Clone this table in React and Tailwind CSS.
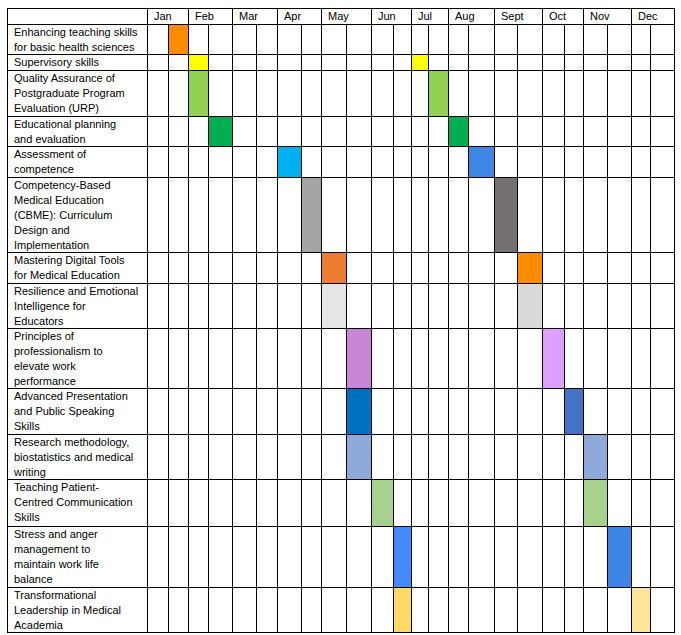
import React from "react";

const months = ["Jan", "Feb", "Mar", "Apr", "May", "Jun", "Jul", "Aug", "Sept", "Oct", "Nov", "Dec"];

// each course: text lines, row height, and which half-month slots are filled
const courses = [
  { lines: ["Enhancing teaching skills", "for basic health sciences"], h: "h-[29px]", fill: { 1: "bg-[#ff8c00]" } },
  { lines: ["Supervisory skills"], h: "h-[15px]", fill: { 2: "bg-[#ffff00]", 12: "bg-[#ffff00]" } },
  { lines: ["Quality Assurance of", "Postgraduate Program", "Evaluation (URP)"], h: "h-[45px]", fill: { 2: "bg-[#92d050]", 13: "bg-[#92d050]" } },
  { lines: ["Educational planning", "and evaluation"], h: "h-[29px]", fill: { 3: "bg-[#00b050]", 14: "bg-[#00b050]" } },
  { lines: ["Assessment of", "competence"], h: "h-[30px]", fill: { 6: "bg-[#00b0f0]", 15: "bg-[#3e86e3]" } },
  { lines: ["Competency-Based", "Medical Education", "(CBME): Curriculum", "Design and", "Implementation"], h: "h-[74px]", fill: { 7: "bg-[#a5a5a5]", 16: "bg-[#767171]" } },
  { lines: ["Mastering Digital Tools", "for Medical Education"], h: "h-[30px]", fill: { 8: "bg-[#ed7d31]", 17: "bg-[#ff8c00]" } },
  { lines: ["Resilience and Emotional", "Intelligence for", "Educators"], h: "h-[44px]", fill: { 8: "bg-[#e7e6e6]", 17: "bg-[#d9d9d9]" } },
  { lines: ["Principles of", "professionalism to", "elevate work", "performance"], h: "h-[59px]", fill: { 9: "bg-[#c986d6]", 18: "bg-[#dda0ff]" } },
  { lines: ["Advanced Presentation", "and Public Speaking", "Skills"], h: "h-[45px]", fill: { 9: "bg-[#0070c0]", 19: "bg-[#4472c4]" } },
  { lines: ["Research methodology,", "biostatistics and medical", "writing"], h: "h-[44px]", fill: { 9: "bg-[#8eaadb]", 20: "bg-[#8eaadb]" } },
  { lines: ["Teaching Patient-", "Centred Communication", "Skills"], h: "h-[46px]", fill: { 10: "bg-[#a9d18e]", 20: "bg-[#a9d18e]" } },
  { lines: ["Stress and anger", "management to", "maintain work life", "balance"], h: "h-[60px]", fill: { 11: "bg-[#448aff]", 21: "bg-[#3c85e3]" } },
  { lines: ["Transformational", "Leadership in Medical", "Academia"], h: "h-[44px]", fill: { 11: "bg-[#ffd966]", 22: "bg-[#ffe599]" } },
];

const slots = Array.from({ length: 24 }, (_, i) => i);

export default function App() {
  return (
    <div className="min-h-screen bg-white pl-[7px] pt-[8px] text-[11px] leading-[15px] text-black" style={{ fontFamily: '"Liberation Sans", Arial, sans-serif' }}>
      <div className="grid w-[668px] grid-cols-[139px_20px_19px_19px_23px_23px_20px_23px_19px_24px_24px_21px_17px_16px_19px_19px_25px_22px_24px_21px_18px_23px_23px_18px_23px] gap-px border border-black bg-black">
        {/* header */}
        <div className="h-[15px] bg-white"></div>
        {months.map((m) => (
          <div key={m} className="col-span-2 h-[15px] bg-white pl-[6px]">
            {m}
          </div>
        ))}

        {/* course rows */}
        {courses.map((c, r) => (
          <React.Fragment key={r}>
            <div className={`${c.h} bg-white pl-[6px] whitespace-nowrap`}>
              {c.lines.map((l, i) => (
                <div key={i}>{l}</div>
              ))}
            </div>
            {slots.map((s) => (
              <div key={s} className={`${c.h} ${c.fill[s] || "bg-white"}`}></div>
            ))}
          </React.Fragment>
        ))}
      </div>
    </div>
  );
}
